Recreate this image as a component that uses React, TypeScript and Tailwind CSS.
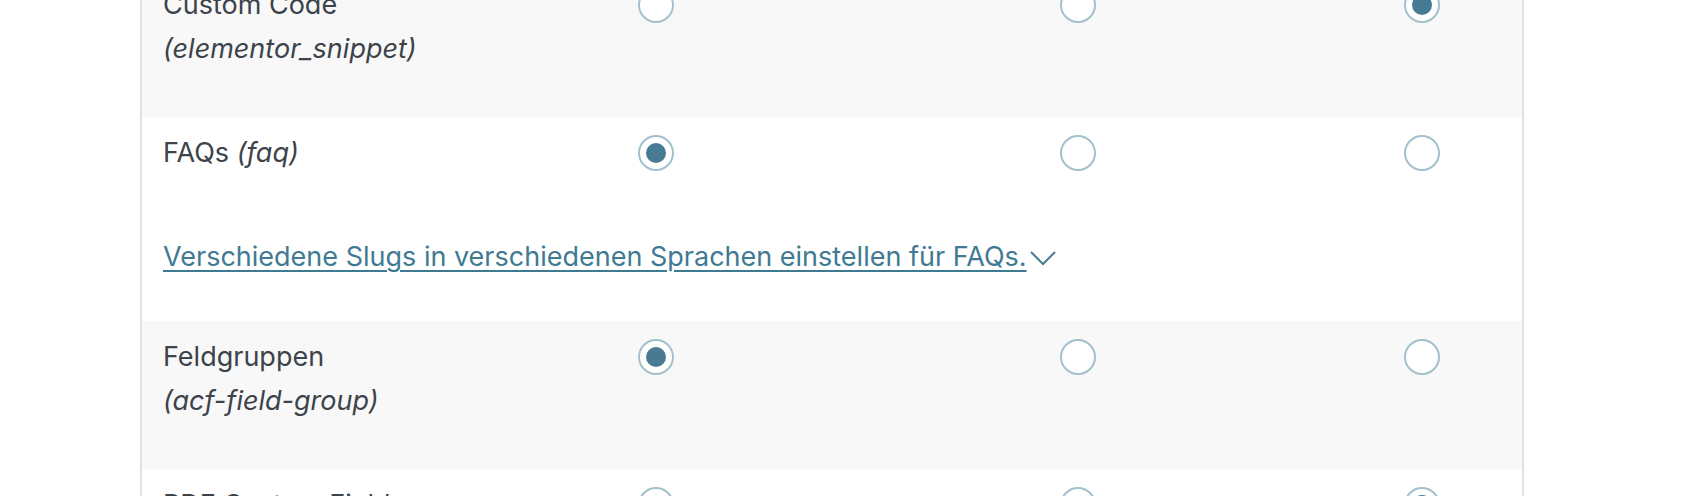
import React from 'react';

type Row = {
  label: string;
  slug: string;
  inline?: boolean;
  checked: number;
  striped: boolean;
  link?: string;
};

const rows: Row[] = [
  { label: 'Custom Code', slug: '(elementor_snippet)', checked: 2, striped: true },
  {
    label: 'FAQs',
    slug: '(faq)',
    inline: true,
    checked: 0,
    striped: false,
    link: 'Verschiedene Slugs in verschiedenen Sprachen einstellen für FAQs.',
  },
  { label: 'Feldgruppen', slug: '(acf-field-group)', checked: 0, striped: true },
  { label: 'PDF Custom Fields', slug: '(pdf-custom-fields)', checked: 2, striped: false },
];

function Radio({ checked }: { checked: boolean }) {
  return (
    <div className="mt-[4px] flex h-[36px] w-[36px] shrink-0 items-center justify-center rounded-full border-2 border-[#a2c1cd] bg-white">
      {checked && <div className="h-[20px] w-[20px] rounded-full bg-[#467b93]" />}
    </div>
  );
}

function Chevron() {
  return (
    <svg width="28" height="16" viewBox="0 0 28 16" fill="none" className="ml-[2px] mt-[2px]">
      <polyline points="2,2 14,14 26,2" stroke="#467b93" strokeWidth="2" />
    </svg>
  );
}

export default function App() {
  return (
    <div className="h-[496px] w-full overflow-hidden bg-white font-['Inter',sans-serif] text-[27px] text-[#3c434a]">
      <div className="-mt-[31px] ml-[140px] w-[1384px] border-x-2 border-[#e1e2e4]">
        {rows.map((row) => (
          <div
            key={row.slug}
            className={`${row.striped ? 'bg-[#f8f8f8]' : 'bg-white'} ${row.link ? 'h-[204px]' : 'h-[148px]'} pt-[14px]`}
          >
            <div className="flex items-start">
              {/* Label */}
              <div className="w-[496px] shrink-0 pl-[21px] leading-[44px]">
                {row.inline ? (
                  <span>
                    {row.label} <em>{row.slug}</em>
                  </span>
                ) : (
                  <>
                    <div>{row.label}</div>
                    <div className="italic">{row.slug}</div>
                  </>
                )}
              </div>

              {/* Radios */}
              <Radio checked={row.checked === 0} />
              <div className="w-[386px] shrink-0" />
              <Radio checked={row.checked === 1} />
              <div className="w-[308px] shrink-0" />
              <Radio checked={row.checked === 2} />
            </div>

            {row.link && (
              <div className="mt-[60px] flex items-center pl-[21px] leading-[44px]">
                <a href="#" className="text-[#3f7a93] underline decoration-[2px] underline-offset-[4px]">
                  {row.link}
                </a>
                <Chevron />
              </div>
            )}
          </div>
        ))}
      </div>
    </div>
  );
}
